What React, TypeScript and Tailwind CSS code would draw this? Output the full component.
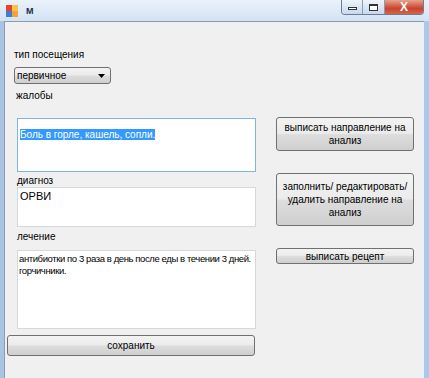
import React from 'react';

const font = { fontFamily: '"Liberation Sans", Arial, sans-serif' };

const btn =
  'border border-[#707070] rounded-[3px] bg-[linear-gradient(to_bottom,#f3f3f3_0%,#ebebeb_48%,#dddddd_52%,#cfcfcf_100%)] text-[10px] leading-[13px] text-black flex items-center justify-center text-center';

const Label: React.FC<{ text: string; className?: string }> = ({ text, className }) => (
  <div className={`text-[10px] leading-[13px] text-black ${className ?? ''}`}>{text}</div>
);

const AppIcon = () => (
  <svg width="12" height="12" viewBox="0 0 12 12">
    <rect x="0" y="0" width="6" height="6" fill="#e8412c" />
    <rect x="6" y="0" width="6" height="6" fill="#f6c343" />
    <rect x="0" y="6" width="6" height="6" fill="#3d7fd6" />
    <rect x="6" y="6" width="6" height="6" fill="#f2a33a" />
  </svg>
);

export default function App() {
  return (
    <div style={font} className="w-[429px] h-[378px] overflow-hidden flex flex-col bg-[#c4d7ee]">
      {/* title bar */}
      <div className="h-[21px] flex items-start bg-[linear-gradient(to_bottom,#eaf2fb,#d3e3f4)]">
        <div className="mt-[5px] ml-[6px] shrink-0">
          <AppIcon />
        </div>
        <div className="mt-[6px] ml-[8px] text-[9px] font-bold text-[#1e2b4a] leading-[10px]">M</div>
        <div className="ml-auto mr-[5px] flex h-[15px] border border-t-0 border-[#6d7c91] rounded-b-[4px] overflow-hidden">
          <div className="w-[21px] bg-[linear-gradient(to_bottom,#eef4fb,#c8d9ee)] border-r border-[#8a9ab0] flex items-center justify-center">
            <div className="w-[9px] h-[3px] border border-[#333] bg-white mt-[3px]" />
          </div>
          <div className="w-[22px] bg-[linear-gradient(to_bottom,#eef4fb,#c8d9ee)] border-r border-[#8a9ab0] flex items-center justify-center">
            <div className="w-[9px] h-[7px] border border-[#333] border-t-2 bg-white" />
          </div>
          <div className="w-[38px] bg-[linear-gradient(to_bottom,#e8a08e,#c9442c_60%,#d8634a)] flex items-center justify-center text-white font-bold text-[12px] leading-[12px]">
            X
          </div>
        </div>
      </div>

      {/* body */}
      <div className="flex flex-1">
        <div className="w-[4px] bg-[#a9c3e3]" />
        <div className="w-[420px] bg-[#f0f0f0] border-t border-l border-[#8a9bb2] flex pt-[26px]">
          {/* left column */}
          <div className="flex flex-col w-[254px] shrink-0">
            <Label text="тип посещения" className="ml-[9px]" />
            <div className="ml-[9px] mt-[6px] w-[97px] h-[17px] border border-[#707070] rounded-[3px] bg-[linear-gradient(to_bottom,#f3f3f3_0%,#ebebeb_48%,#dddddd_52%,#cfcfcf_100%)] flex items-center pl-[2px] pr-[5px]">
              <span className="text-[10px] leading-[13px] text-black flex-1">первичное</span>
              <svg width="7" height="4" viewBox="0 0 7 4">
                <path d="M0 0 H7 L3.5 4 Z" fill="#000" />
              </svg>
            </div>
            <Label text="жалобы" className="ml-[11px] mt-[5px]" />
            <div className="ml-[12px] mt-[16px] w-[239px] h-[54px] bg-white border border-[#7eb4ea] px-[2px] pt-[2px]">
              <span className="bg-[#3399ff] text-white text-[10px] leading-[12px]">Боль в горле, кашель, сопли.</span>
            </div>
            <Label text="диагноз" className="ml-[12px] mt-[2px]" />
            <div className="ml-[12px] w-[239px] h-[40px] bg-white border border-[#d5d8de] px-[2px] pt-[2px] text-[11px] leading-[13px] text-black">
              ОРВИ
            </div>
            <Label text="лечение" className="ml-[12px] mt-[3px]" />
            <div className="ml-[12px] mt-[7px] w-[239px] h-[79px] bg-white border border-[#d5d8de] px-[1px] pt-[2px] text-[9.5px] leading-[12px] tracking-[-0.4px] whitespace-nowrap overflow-hidden text-black">
              антибиотки по 3 раза в день после еды в течении 3 дней.
              <br />
              горчичники.
            </div>
            <div className={`${btn} ml-[2px] mt-[6px] w-[248px] h-[21px]`}>сохранить</div>
          </div>
          {/* right column */}
          <div className="flex flex-col ml-[17px] w-[138px] pt-[69px]">
            <div className={`${btn} h-[34px]`}>
              выписать направление на
              <br />
              анализ
            </div>
            <div className={`${btn} h-[53px] mt-[22px]`}>
              заполнить/ редактировать/
              <br />
              удалить направление на
              <br />
              анализ
            </div>
            <div className={`${btn} h-[16px] mt-[22px]`}>выписать рецепт</div>
          </div>
        </div>
        <div className="w-[5px] bg-[#a9c8ea]" />
      </div>
    </div>
  );
}
